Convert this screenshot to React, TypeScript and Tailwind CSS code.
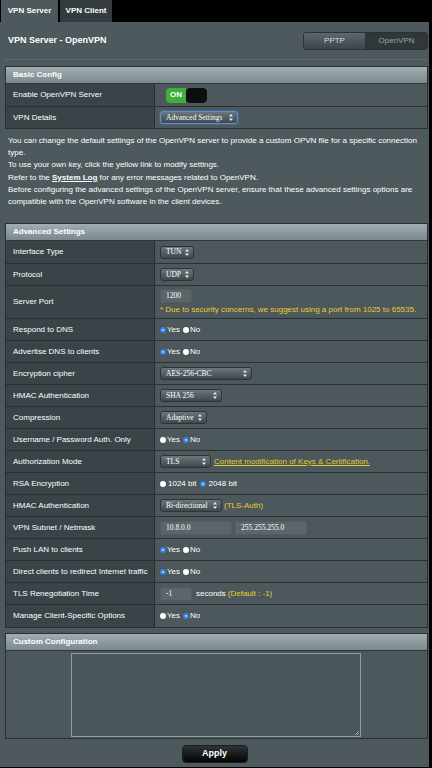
import React from 'react'

const sans = "font-['Liberation_Sans',Arial,sans-serif]"
const serif = "font-['Liberation_Serif','Times_New_Roman',serif]"

function Arrows() {
  return (
    <svg width="4" height="7" viewBox="0 0 4 7" className="shrink-0">
      <path d="M2 0 L4 2.6 L0 2.6 Z" fill="#e6eaec" />
      <path d="M2 7 L4 4.4 L0 4.4 Z" fill="#e6eaec" />
    </svg>
  )
}

function Select({ label, w, focus }: { label: string; w: string; focus?: boolean }) {
  return (
    <div
      className={`${w} ${serif} h-[13px] flex items-center justify-between rounded-[3px] bg-linear-to-b from-[#6b777c] to-[#3f484d] pl-[5px] pr-[4px] text-[7.5px] leading-none text-white ${
        focus ? 'border border-[#5e8fd0] shadow-[0_0_2px_#5e8fd0]' : 'border border-[#2d3437]'
      }`}
    >
      <span className="whitespace-nowrap">{label}</span>
      <Arrows />
    </div>
  )
}

function Input({ value, w }: { value: string; w: string }) {
  return (
    <div className={`${w} ${serif} h-[14px] flex items-center bg-[#5a666a] border border-[#525d61] pl-[5px] text-[7.5px] text-white`}>
      {value}
    </div>
  )
}

function Radio({ on }: { on: boolean }) {
  return on ? (
    <span className="w-[6px] h-[6px] rounded-full bg-[#2f86e0] flex items-center justify-center">
      <span className="w-[2px] h-[2px] rounded-full bg-[#cfe3fa]" />
    </span>
  ) : (
    <span className="w-[6px] h-[6px] rounded-full bg-white" />
  )
}

function YesNo({ yes }: { yes: boolean }) {
  return (
    <div className="flex items-center text-[8px] text-white">
      <Radio on={yes} />
      <span className="ml-[1px] mr-[3px]">Yes</span>
      <Radio on={!yes} />
      <span className="ml-[1px]">No</span>
    </div>
  )
}

function Row({ label, children, h = 'h-[22px]' }: { label: string; children: React.ReactNode; h?: string }) {
  return (
    <div className={`flex ${h} border-b border-[#283033]`}>
      <div className="w-[149px] shrink-0 bg-[#3a4347] flex items-center pl-[7px] text-[8px] text-white border-r border-[#283033]">
        {label}
      </div>
      <div className="flex-1 bg-[#4c585c] flex items-center pl-[5px]">{children}</div>
    </div>
  )
}

function Header({ title }: { title: string }) {
  return (
    <div className="h-[17px] flex items-center pl-[7px] bg-linear-to-b from-[#a1adb1] to-[#7b898e] border-b border-[#2f373a] text-[8px] font-bold text-white">
      {title}
    </div>
  )
}

export default function App() {
  return (
    <div className={`w-[432px] h-[768px] bg-black overflow-hidden ${sans}`}>
      {/* TABS */}
      <div className="h-[22px] flex items-end gap-[2px] pl-[1px]">
        <div className="h-[22px] w-[57px] bg-[#4d595d] flex items-center justify-center text-[8px] font-bold text-white">
          VPN Server
        </div>
        <div className="h-[22px] w-[52px] bg-[#343c40] flex items-center justify-center text-[8px] font-bold text-white">
          VPN Client
        </div>
      </div>

      <div className="w-[429px] h-[745px] bg-[#4d595d]">
        {/* TITLE */}
        <div className="h-[38px] ml-[5px] w-[423px] flex items-center justify-between border-b border-[#5f6b6f]">
          <span className="pl-[3px] text-[9px] font-bold text-white">VPN Server - OpenVPN</span>
          <div className="flex h-[18px] rounded-[3px] overflow-hidden border border-[#2b3235]">
            <div className="w-[62px] flex items-center justify-center bg-linear-to-b from-[#5d686d] to-[#3c4549] text-[8px] text-[#d6dcde] border-r border-[#2b3235]">
              PPTP
            </div>
            <div className="w-[61px] flex items-center justify-center bg-[#2f373b] text-[8px] text-[#9aa3a7]">
              OpenVPN
            </div>
          </div>
        </div>

        {/* BASIC CONFIG */}
        <div className="ml-[5px] w-[423px] mt-[6px] border border-[#283033] border-b-0">
          <Header title="Basic Config" />
          <Row label="Enable OpenVPN Server" h="h-[23px]">
            <div className="ml-[6px] flex h-[15px] w-[41px] rounded-[4px] overflow-hidden">
              <div className="w-[20px] bg-[#3fae3a] flex items-center justify-center text-[8px] font-bold text-white">ON</div>
              <div className="flex-1 bg-[#0c0f10] rounded-[4px]" />
            </div>
          </Row>
          <Row label="VPN Details">
            <Select label="Advanced Settings" w="w-[78px]" focus />
          </Row>
        </div>

        {/* DESCRIPTION */}
        <div className="px-[8px] pt-[6px] text-[8px] leading-[12.2px] text-white">
          <p>You can change the default settings of the OpenVPN server to provide a custom OPVN file for a specific connection type.</p>
          <p>To use your own key, click the yellow link to modify settings.</p>
          <p>
            Refer to the <span className="font-bold underline">System Log</span> for any error messages related to OpenVPN.
          </p>
          <p>
            Before configuring the advanced settings of the OpenVPN server, ensure that these advanced settings options are compatible with the
            OpenVPN software in the client devices.
          </p>
        </div>

        {/* ADVANCED SETTINGS */}
        <div className="ml-[5px] w-[423px] mt-[15px] border border-[#283033] border-b-0">
          <Header title="Advanced Settings" />
          <Row label="Interface Type" h="h-[23px]">
            <Select label="TUN" w="w-[34px]" />
          </Row>
          <Row label="Protocol">
            <Select label="UDP" w="w-[34px]" />
          </Row>
          <Row label="Server Port" h="h-[33px]">
            <div className="flex flex-col gap-[1px]">
              <Input value="1200" w="w-[32px]" />
              <span className="text-[8px] text-[#e8cf2c]">* Due to security concerns, we suggest using a port from 1025 to 65535.</span>
            </div>
          </Row>
          <Row label="Respond to DNS">
            <YesNo yes />
          </Row>
          <Row label="Advertise DNS to clients">
            <YesNo yes />
          </Row>
          <Row label="Encryption cipher">
            <Select label="AES-256-CBC" w="w-[92px]" />
          </Row>
          <Row label="HMAC Authentication">
            <Select label="SHA 256" w="w-[62px]" />
          </Row>
          <Row label="Compression">
            <Select label="Adaptive" w="w-[47px]" />
          </Row>
          <Row label="Username / Password Auth. Only">
            <YesNo yes={false} />
          </Row>
          <Row label="Authorization Mode">
            <Select label="TLS" w="w-[51px]" />
            <span className="ml-[3px] text-[8px] text-[#e0c82e] underline">Content modification of Keys &amp; Certification.</span>
          </Row>
          <Row label="RSA Encryption">
            <div className="flex items-center text-[8px] text-white">
              <Radio on={false} />
              <span className="ml-[2px] mr-[4px]">1024 bit</span>
              <Radio on />
              <span className="ml-[2px]">2048 bit</span>
            </div>
          </Row>
          <Row label="HMAC Authentication">
            <Select label="Bi-directional" w="w-[62px]" />
            <span className="ml-[2px] text-[8px] text-[#e8cf2c]">(TLS-Auth)</span>
          </Row>
          <Row label="VPN Subnet / Netmask">
            <Input value="10.8.0.0" w="w-[72px]" />
            <div className="w-[3px]" />
            <Input value="255.255.255.0" w="w-[72px]" />
          </Row>
          <Row label="Push LAN to clients">
            <YesNo yes />
          </Row>
          <Row label="Direct clients to redirect Internet traffic">
            <YesNo yes />
          </Row>
          <Row label="TLS Renegotiation Time">
            <Input value="-1" w="w-[32px]" />
            <span className="ml-[4px] text-[8px] text-white">seconds</span>
            <span className="ml-[2px] text-[8px] text-[#e8cf2c]">(Default : -1)</span>
          </Row>
          <Row label="Manage Client-Specific Options" h="h-[23px]">
            <YesNo yes={false} />
          </Row>
        </div>

        {/* CUSTOM CONFIGURATION */}
        <div className="ml-[5px] w-[423px] mt-[5px] border border-[#283033]">
          <Header title="Custom Configuration" />
          <div className="h-[87px] bg-[#4c585c] flex justify-center items-start pt-[2px] pr-[2px]">
            <div className="w-[290px] h-[84px] border border-[#8f9ca0] bg-[#4a575b] relative">
              <svg width="5" height="5" viewBox="0 0 5 5" className="absolute right-[1px] bottom-[1px]">
                <path d="M5 1 L1 5 M5 3 L3 5" stroke="#aab3b6" strokeWidth="0.8" />
              </svg>
            </div>
          </div>
        </div>

        {/* APPLY */}
        <div className="flex justify-center pt-[6px]">
          <div className="w-[66px] h-[18px] rounded-[4px] bg-linear-to-b from-[#2e3438] to-[#050606] border border-[#1a1e20] flex items-center justify-center text-[9px] font-bold text-white">
            Apply
          </div>
        </div>
      </div>
    </div>
  )
}
